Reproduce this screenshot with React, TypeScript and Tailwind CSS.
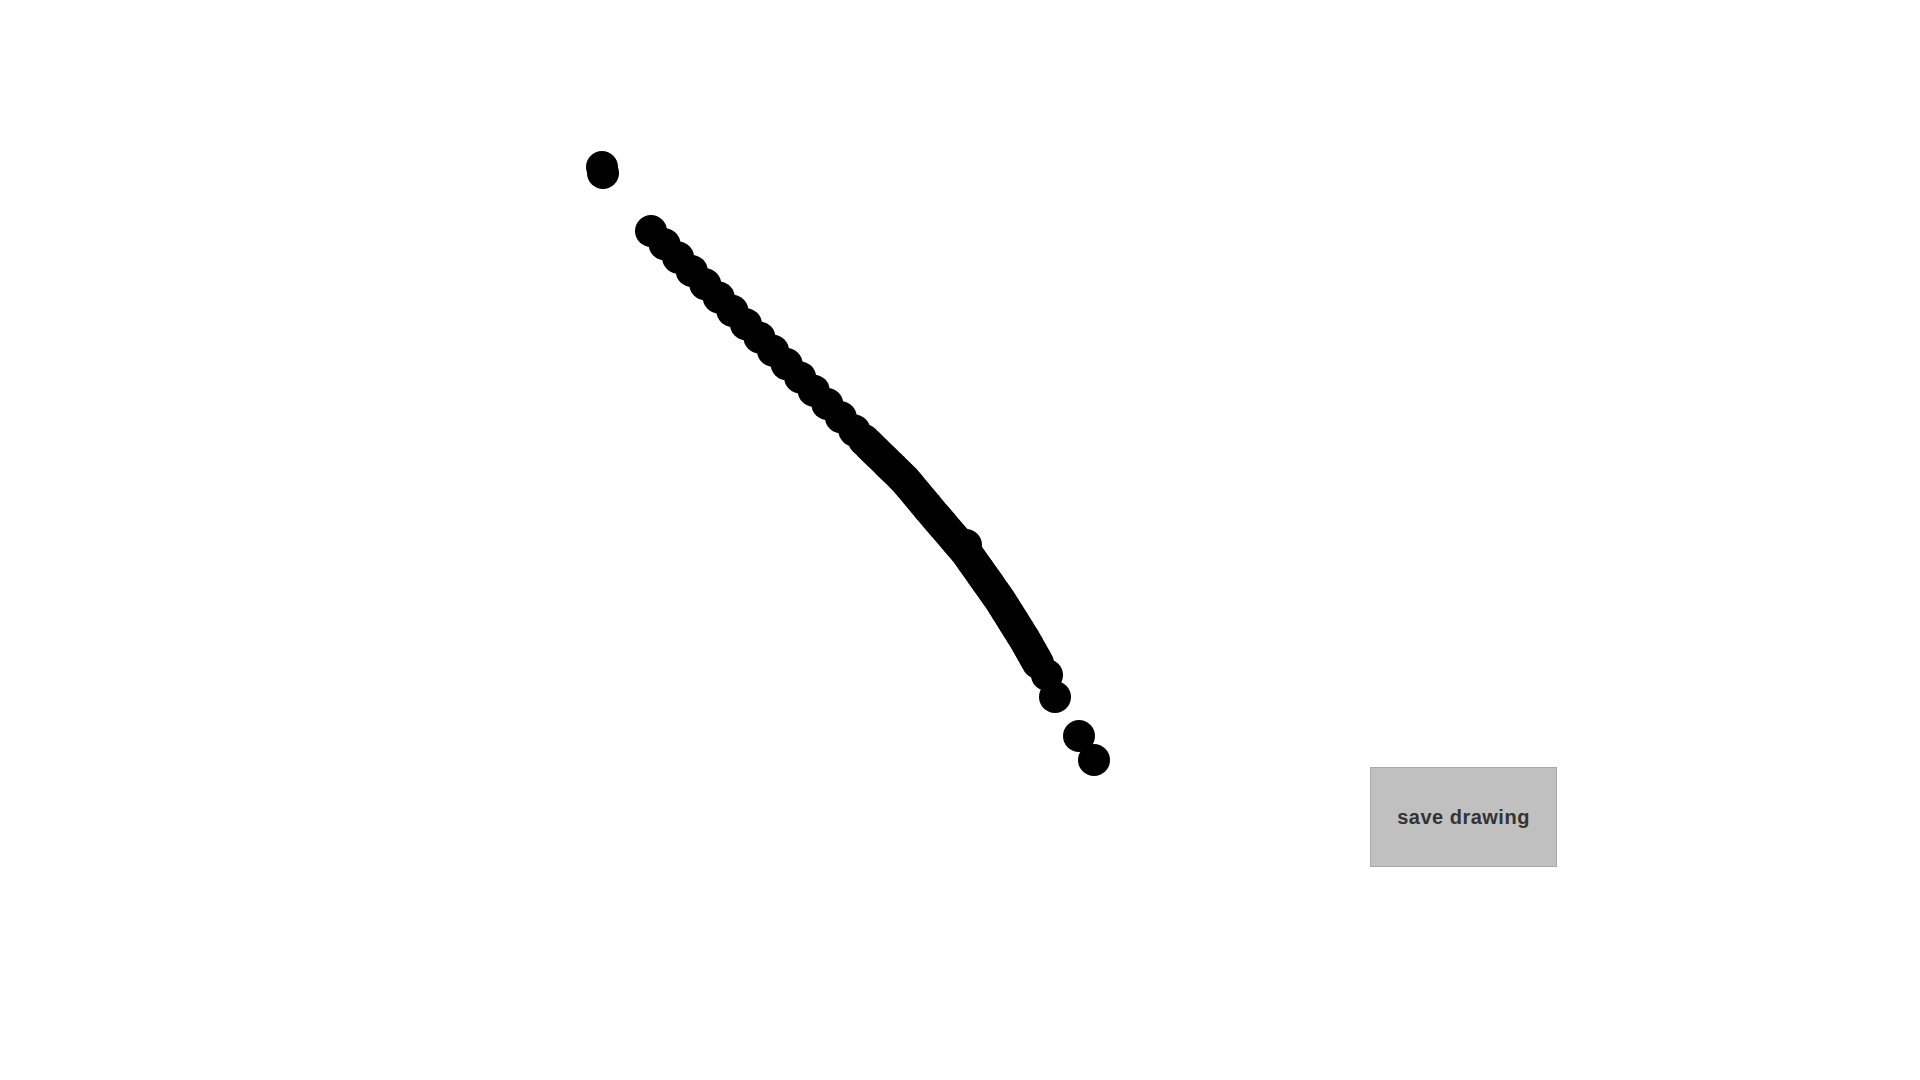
import React from "react";

type Point = [number, number];

// sample dots along a polyline, one every `step` px
function sampleStroke(path: Point[], step: number): Point[] {
  const dots: Point[] = [path[0]];
  let carry = 0;
  for (let i = 1; i < path.length; i++) {
    const [x0, y0] = path[i - 1];
    const [x1, y1] = path[i];
    const len = Math.hypot(x1 - x0, y1 - y0);
    let d = step - carry;
    while (d <= len) {
      const t = d / len;
      dots.push([x0 + (x1 - x0) * t, y0 + (y1 - y0) * t]);
      d += step;
    }
    carry = len - (d - step);
  }
  return dots;
}

const firstDots: Point[] = [
  [602, 167],
  [603, 173],
];

// sparse part of the stroke, mouse moving fast
const sparseDots = sampleStroke(
  [
    [651, 231],
    [864, 440],
  ],
  19,
);

// dense part, mouse moving slowly
const denseDots = sampleStroke(
  [
    [864, 440],
    [905, 480],
    [930, 510],
    [966, 552],
    [1000, 600],
    [1025, 640],
    [1038, 663],
  ],
  4,
);

const lastDots: Point[] = [
  [1047, 675],
  [1055, 697],
  [1079, 736],
  [1094, 760],
];

const dots = [...firstDots, ...sparseDots, ...denseDots, ...lastDots];

export default function App() {
  return (
    <div className="relative h-[1080px] w-[1920px] overflow-hidden bg-white">
      <svg
        className="absolute inset-0"
        height={1080}
        viewBox="0 0 1920 1080"
        width={1920}
      >
        {dots.map(([x, y], index) => (
          <circle cx={x} cy={y} fill="#000" key={index} r={16} />
        ))}
        <circle cx={966} cy={545} fill="#000" r={16} />
      </svg>

      <button
        className="absolute left-[1370px] top-[767px] flex h-[100px] w-[187px] items-center justify-center border border-[#a8a8a8] bg-[#c0c0c0] text-[20px] font-bold tracking-[0.5px] text-[#333333]"
        style={{ fontFamily: '"Liberation Sans", Arial, sans-serif' }}
        type="button"
      >
        save drawing
      </button>
    </div>
  );
}
